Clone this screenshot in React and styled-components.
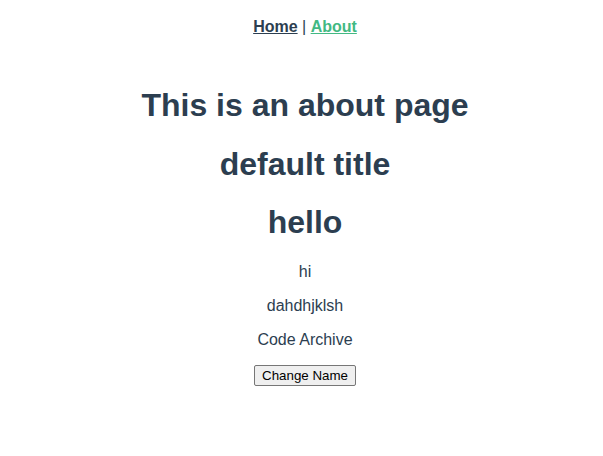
import React from "react";
import styled, { createGlobalStyle } from "styled-components";

const Global = createGlobalStyle`
  body {
    margin: 0;
    background: #ffffff;
  }
`;

const AppRoot = styled.div`
  font-family: "Liberation Sans", Arial, Helvetica, sans-serif;
  -webkit-font-smoothing: antialiased;
  text-align: center;
  color: #2c3e50;
  padding-left: 7px;
`;

const Nav = styled.nav`
  padding: 18px 30px 30px;
  font-size: 16px;
  line-height: 18px;
`;

const NavLink = styled.a`
  font-weight: bold;
  color: ${(p) => (p.$active ? "#42b983" : "#2c3e50")};
  text-decoration: underline;
  cursor: pointer;
`;

const Title = styled.h1`
  font-size: 32px;
  line-height: 37px;
  font-weight: bold;
  margin: 21.44px 0;
`;

const Para = styled.p`
  font-size: 16px;
  line-height: 18px;
  margin: 16px 0;
`;

const Button = styled.button`
  font-family: "Liberation Sans", Arial, sans-serif;
  font-size: 13.333px;
  color: #000;
  background: #efefef;
  border: 1px solid #767676;
  border-radius: 2px;
  padding: 2px 7px;
  line-height: 15px;
  cursor: pointer;
`;

export default function App() {
  return (
    <>
      <Global />
      <AppRoot>
        <Nav>
          <NavLink>Home</NavLink> | <NavLink $active>About</NavLink>
        </Nav>
        <Title>This is an about page</Title>
        <Title>default title</Title>
        <Title>hello</Title>
        <Para>hi</Para>
        <Para>dahdhjklsh</Para>
        <Para>Code Archive</Para>
        <Button>Change Name</Button>
      </AppRoot>
    </>
  );
}
